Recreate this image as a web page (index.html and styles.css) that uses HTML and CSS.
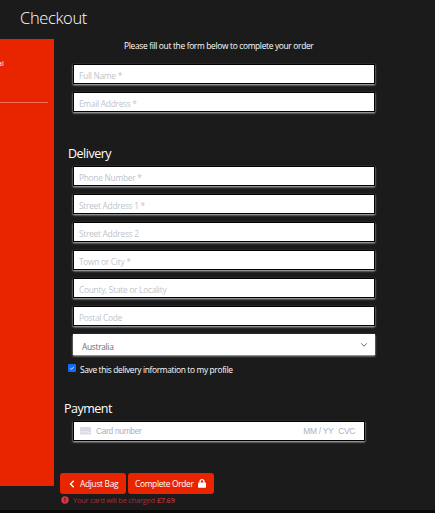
FILE: index.html
```html
<!DOCTYPE html>
<html lang="en">
<head>
<meta charset="utf-8">
<title>Checkout</title>
<link rel="stylesheet" href="styles.css">
</head>
<body>
<h1 class="title">Checkout</h1>
<div class="layout">
  <aside class="summary"><span class="total">al</span><hr class="rule"></aside>
  <main class="checkout">
    <p class="intro"><span class="intro-text">Please fill out the form below to complete your order</span></p>
    <div class="fields contact">
      <div class="field"><span>Full Name *</span></div>
      <div class="field"><span>Email Address *</span></div>
    </div>
    <h2 class="heading delivery">Delivery</h2>
    <div class="fields">
      <div class="field"><span>Phone Number *</span></div>
      <div class="field"><span>Street Address 1 *</span></div>
      <div class="field"><span>Street Address 2</span></div>
      <div class="field"><span>Town or City *</span></div>
      <div class="field"><span>County, State or Locality</span></div>
      <div class="field"><span>Postal Code</span></div>
      <div class="select"><span>Australia</span>
        <svg width="8" height="6" viewBox="0 0 8 6"><path d="M1.2 1.4 4 4.2 6.8 1.4" fill="none" stroke="#555" stroke-width=".9"/></svg>
      </div>
    </div>
    <div class="save">
      <svg width="8" height="8" viewBox="0 0 8 8"><rect width="8" height="8" rx="1" fill="#0d6efd"/><path d="M2.2 4.1 3.5 5.3 5.9 2.9" fill="none" stroke="#fff" stroke-width=".8"/></svg>
      <span>Save this delivery information to my profile</span>
    </div>
    <h2 class="heading payment">Payment</h2>
    <div class="card">
      <svg width="11" height="8" viewBox="0 0 11 8"><rect width="11" height="7.5" rx="1" fill="#d9dbe4"/><path d="M1 4.8h1.5M3.5 4.8H5M6 4.8h1.5M8.5 5.5H10" stroke="#fff" stroke-width=".9"/></svg>
      <span class="number">Card number</span>
      <span class="expiry">MM / YY</span>
      <span class="cvc">CVC</span>
    </div>
    <div class="actions">
      <div class="button adjust">
        <svg width="6" height="8" viewBox="0 0 6 8"><path d="M4.7.7 1.5 4 4.7 7.3" fill="none" stroke="#fff" stroke-width="1.4"/></svg>
        <span>Adjust Bag</span>
      </div>
      <div class="button complete">
        <span>Complete Order</span>
        <svg width="8" height="9" viewBox="0 0 8 9"><rect y="3.4" width="8" height="5.3" rx=".8" fill="#fff"/><path d="M2 4.2V2.7a2 2 0 0 1 4 0v1.5" fill="none" stroke="#fff" stroke-width="1.3"/></svg>
      </div>
    </div>
    <p class="notice">
      <svg width="8" height="8" viewBox="0 0 8 8"><circle cx="4" cy="4" r="3.7" fill="#dc3545"/><path d="M4 1.8v2.6M4 5.2v1" stroke="#1b1b1b" stroke-width="1"/></svg>
      <span>Your card will be charged <strong>£7.69</strong></span>
    </p>
  </main>
</div>
<footer class="footer"></footer>
</body>
</html>
```
FILE: styles.css
```css
* { box-sizing: border-box; }
body {
  margin: 0;
  height: 513px;
  display: flex;
  flex-direction: column;
  overflow: hidden;
  background: #1b1b1b;
  color: #fff;
  font: 8.4px/12px "Open Sans", "Noto Sans", sans-serif;
  letter-spacing: -.32px;
  white-space: nowrap;
}
h1, h2, p { margin: 0; font-weight: 300; }
svg { display: block; flex: none; }
.title { height: 39px; padding: 6px 0 0 20px; font-size: 16.5px; font-weight: 350; line-height: 24px; letter-spacing: -.35px; }
.layout { display: flex; height: 471px; }
.summary { width: 54px; height: 447px; padding-top: 19px; background: #e92500; font-size: 7px; flex: none; letter-spacing: 0; }
.total { display: block; margin-left: -2px; }
.rule { width: 48px; height: 1px; margin: 32px 0 0; border: 0; background: #f27059; }
.checkout { width: 381px; }
.intro { height: 25px; padding: 1px 0 0 70px; }
.intro-text { font-weight: 400; }
.fields { display: grid; gap: 8px; width: 302px; margin-left: 19px; }
.field, .card {
  display: flex;
  align-items: center;
  height: 20px;
  border: 1px solid #000;
  background: #fff;
  box-shadow: 0 1px 2px #c5cbd0;
}
.field { padding: 3px 0 0 5px; color: #bdc5cd; letter-spacing: -.28px; }
.heading { font-size: 12.5px; line-height: 18px; letter-spacing: -.5px; font-weight: 400; }
.delivery { padding: 33px 0 3px 14px; }
.select {
  display: flex;
  align-items: center;
  justify-content: space-between;
  height: 21px;
  padding: 0 7px 0 9px;
  background: #fff;
  color: #68717a;
  box-shadow: 0 1px 2px #c5cbd0;
}
.select span { padding-top: 5px; }
.save { display: flex; gap: 4px; height: 14px; margin-top: 9px; padding-left: 14px; letter-spacing: -.34px; }
.save span { line-height: 11px; }
.payment { height: 43px; padding: 22px 0 0 10px; }
.card { width: 292px; margin-left: 19px; padding-left: 6px; color: #a4b4c4; font-family: "Liberation Sans", sans-serif; letter-spacing: -.3px; }
.number { margin-left: 5px; }
.expiry { margin-left: auto; }
.cvc { margin: 0 9px 0 5px; }
.actions { display: flex; gap: 2px; margin: 32px 0 0 6px; }
.button { display: flex; align-items: center; height: 21px; padding-top: 1px; border-radius: 3px; background: #e92500; }
.adjust { width: 66px; padding-left: 9px; gap: 5px; }
.complete { width: 86px; padding-left: 7px; gap: 4px; }
.complete svg { margin: -1px 9px 0 auto; }
.notice { display: flex; align-items: center; gap: 4px; height: 11px; padding-left: 8px; color: #a52d38; font-size: 7.5px; letter-spacing: -.25px; }
.notice span { font-weight: 400; }
.notice svg { margin-left: -1px; }
.notice strong { font-weight: 700; }
.footer { height: 3px; background: #0c0909; }
```
